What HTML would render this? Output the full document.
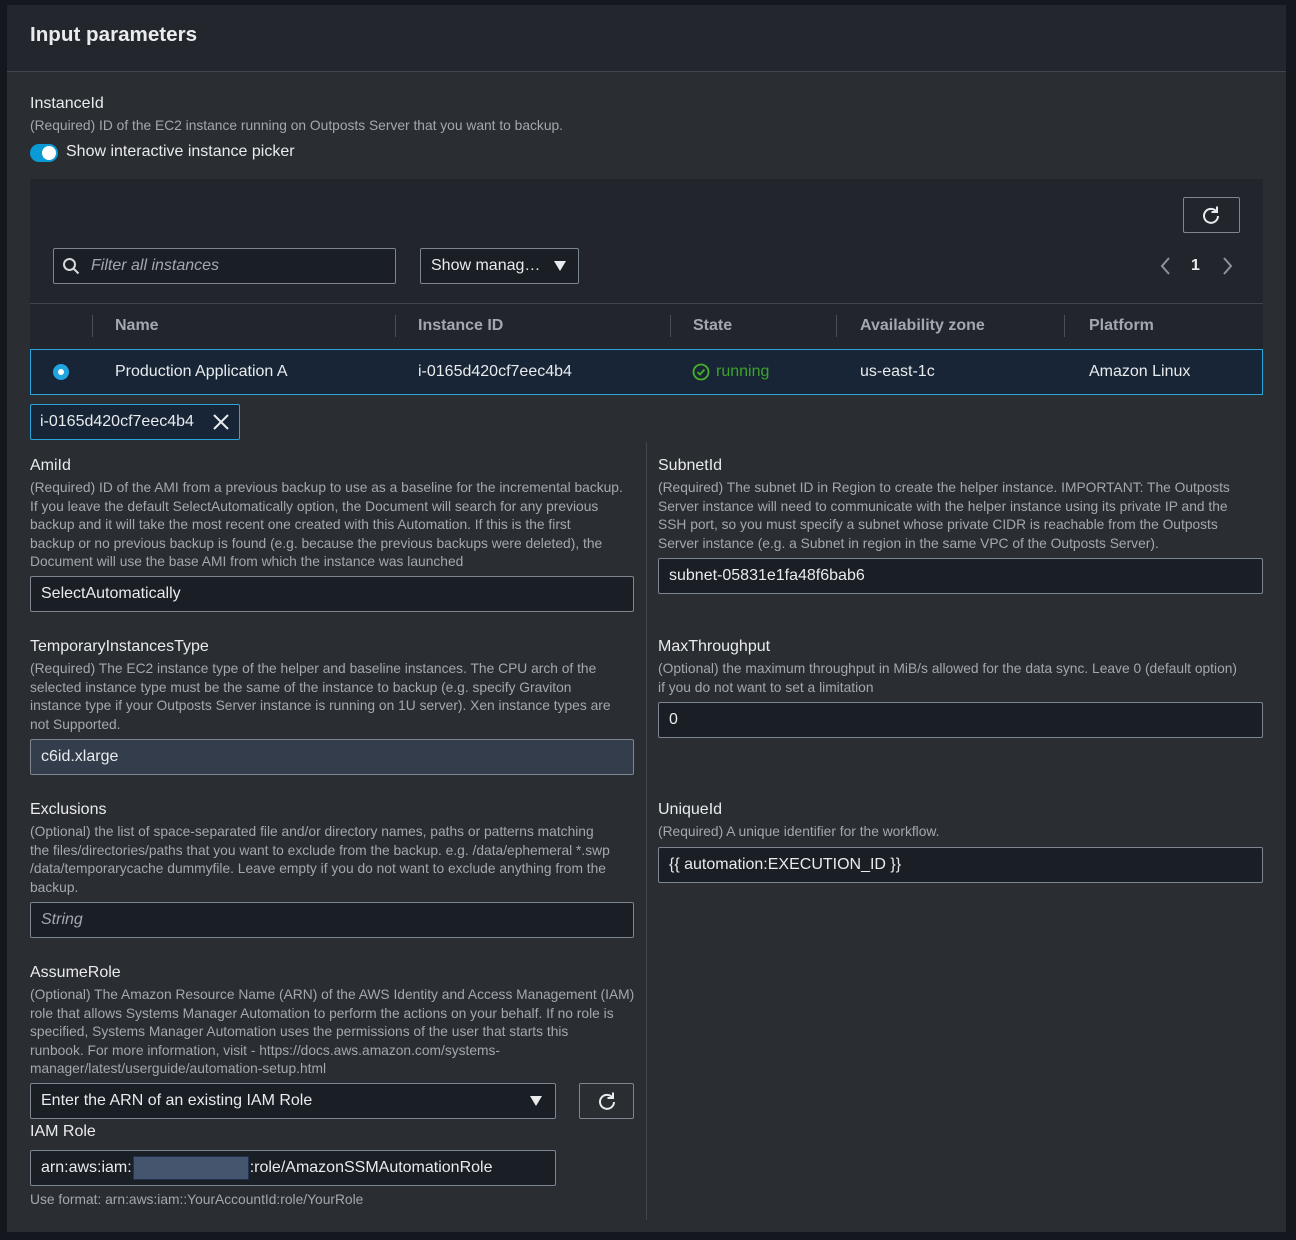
<!DOCTYPE html>
<html><head><meta charset="utf-8">
<style>
*{box-sizing:border-box;margin:0;padding:0}
body{width:1296px;height:1240px;background:#14171d;font-family:"Liberation Sans",sans-serif;position:relative;overflow:hidden;color:#e9ebed}
.a{position:absolute}
#panel{left:7px;top:5px;width:1279px;height:1227px;background:#2a2d32}
#head{left:7px;top:5px;width:1279px;height:67px;background:#23262c;border-bottom:1px solid #41454c}
.t{position:absolute;white-space:nowrap}
.lbl{font-size:16px;color:#e9ebed}
.d{font-size:13.8px;color:#a4a8ae;line-height:18.5px;white-space:nowrap}
.in{position:absolute;background:#1a1e25;border:1px solid #7d8590;border-radius:2px;font-size:16px;color:#e9ebed;padding-left:10px;display:flex;align-items:center;white-space:nowrap}
.th{font-size:16px;font-weight:bold;color:#a4a8ae;top:317px}
.cd{position:absolute;top:315px;width:1px;height:22px;background:#4a4f57}
.td{font-size:16px;color:#e9ebed;top:363px}
</style></head><body>
<div class="a" id="panel"></div>
<div class="a" id="head"></div>
<div class="t" style="left:30px;top:23px;font-size:20.6px;font-weight:bold;color:#e9ebed">Input parameters</div>

<div class="t lbl" style="left:30px;top:95px">InstanceId</div>
<div class="t d" style="left:30px;top:117px">(Required) ID of the EC2 instance running on Outposts Server that you want to backup.</div>
<div class="a" style="left:30px;top:144px;width:28px;height:18px;border-radius:9px;background:#0a9ad6"></div>
<div class="a" style="left:42px;top:146px;width:14px;height:14px;border-radius:7px;background:#fff"></div>
<div class="t" style="left:66px;top:143px;font-size:16px">Show interactive instance picker</div>

<div class="a" style="left:30px;top:179px;width:1233px;height:216px;background:#22252c"></div>
<div class="a" style="left:1183px;top:197px;width:57px;height:36px;border:1px solid #7d8590;border-radius:2px"></div>
<svg class="a" style="left:1201px;top:205px" width="20" height="20" viewBox="0 0 20 20"><path d="M15.5 6.5A7 7 0 1 0 17 11" fill="none" stroke="#e9ebed" stroke-width="2"/><path d="M16 1.5V7h-5.5" fill="none" stroke="#e9ebed" stroke-width="2"/></svg>
<div class="in" style="left:53px;top:248px;width:343px;height:36px;padding-left:37px;font-style:italic;color:#a4a8ae">Filter all instances</div>
<svg class="a" style="left:62px;top:257px" width="18" height="18" viewBox="0 0 18 18"><circle cx="7.5" cy="7.5" r="5.5" fill="none" stroke="#d5d8dc" stroke-width="2"/><path d="M11.5 11.5l5 5" stroke="#d5d8dc" stroke-width="2"/></svg>
<div class="in" style="left:420px;top:248px;width:159px;height:36px">Show manag…</div>
<div class="a" style="left:554px;top:261px;width:0;height:0;border-left:6px solid transparent;border-right:6px solid transparent;border-top:10px solid #e9ebed"></div>
<svg class="a" style="left:1157px;top:256px" width="80" height="20" viewBox="0 0 80 20"><path d="M12 2L5 10l7 8" fill="none" stroke="#8d9299" stroke-width="2"/><path d="M67 2l7 8-7 8" fill="none" stroke="#8d9299" stroke-width="2"/></svg>
<div class="t" style="left:1191px;top:257px;font-size:16px;font-weight:bold">1</div>
<div class="a" style="left:30px;top:303px;width:1233px;height:1px;background:#41454c"></div>
<div class="cd" style="left:92px"></div><div class="cd" style="left:395px"></div><div class="cd" style="left:670px"></div><div class="cd" style="left:836px"></div><div class="cd" style="left:1064px"></div>
<div class="t th" style="left:115px">Name</div>
<div class="t th" style="left:418px">Instance ID</div>
<div class="t th" style="left:693px">State</div>
<div class="t th" style="left:860px">Availability zone</div>
<div class="t th" style="left:1089px">Platform</div>
<div class="a" style="left:30px;top:349px;width:1233px;height:46px;background:#172536;border:1px solid #2aa5d9"></div>
<div class="a" style="left:53px;top:364px;width:16px;height:16px;border-radius:8px;background:#21a5e0"></div>
<div class="a" style="left:58px;top:369px;width:6px;height:6px;border-radius:3px;background:#fff"></div>
<div class="t td" style="left:115px">Production Application A</div>
<div class="t td" style="left:418px">i-0165d420cf7eec4b4</div>
<svg class="a" style="left:692px;top:363px" width="18" height="18" viewBox="0 0 18 18"><circle cx="9" cy="9" r="7.5" fill="none" stroke="#47b02a" stroke-width="1.8"/><path d="M5.5 9l2.5 2.5 4.5-5" fill="none" stroke="#47b02a" stroke-width="1.8"/></svg>
<div class="t td" style="left:716px;color:#3fa32a">running</div>
<div class="t td" style="left:860px">us-east-1c</div>
<div class="t td" style="left:1089px">Amazon Linux</div>

<div class="a" style="left:30px;top:404px;width:210px;height:36px;background:#172536;border:1px solid #2aa5d9;border-radius:2px"></div>
<div class="t" style="left:40px;top:413px;font-size:16px">i-0165d420cf7eec4b4</div>
<svg class="a" style="left:212px;top:413px" width="18" height="18" viewBox="0 0 18 18"><path d="M2 2l14 14M16 2L2 16" stroke="#e9ebed" stroke-width="2"/></svg>

<div class="a" style="left:646px;top:442px;width:1px;height:778px;background:#41454c"></div>

<div class="t lbl" style="left:30px;top:457px">AmiId</div>
<div class="t d" style="left:30px;top:479px">(Required) ID of the AMI from a previous backup to use as a baseline for the incremental backup.<br>If you leave the default SelectAutomatically option, the Document will search for any previous<br>backup and it will take the most recent one created with this Automation. If this is the first<br>backup or no previous backup is found (e.g. because the previous backups were deleted), the<br>Document will use the base AMI from which the instance was launched</div>
<div class="in" style="left:30px;top:576px;width:604px;height:36px">SelectAutomatically</div>

<div class="t lbl" style="left:30px;top:638px">TemporaryInstancesType</div>
<div class="t d" style="left:30px;top:660px">(Required) The EC2 instance type of the helper and baseline instances. The CPU arch of the<br>selected instance type must be the same of the instance to backup (e.g. specify Graviton<br>instance type if your Outposts Server instance is running on 1U server). Xen instance types are<br>not Supported.</div>
<div class="in" style="left:30px;top:739px;width:604px;height:36px;background:#343d4b">c6id.xlarge</div>

<div class="t lbl" style="left:30px;top:801px">Exclusions</div>
<div class="t d" style="left:30px;top:823px">(Optional) the list of space-separated file and/or directory names, paths or patterns matching<br>the files/directories/paths that you want to exclude from the backup. e.g. /data/ephemeral *.swp<br>/data/temporarycache dummyfile. Leave empty if you do not want to exclude anything from the<br>backup.</div>
<div class="in" style="left:30px;top:902px;width:604px;height:36px;font-style:italic;color:#a4a8ae">String</div>

<div class="t lbl" style="left:30px;top:964px">AssumeRole</div>
<div class="t d" style="left:30px;top:986px">(Optional) The Amazon Resource Name (ARN) of the AWS Identity and Access Management (IAM)<br>role that allows Systems Manager Automation to perform the actions on your behalf. If no role is<br>specified, Systems Manager Automation uses the permissions of the user that starts this<br>runbook. For more information, visit - https://docs.aws.amazon.com/systems-<br>manager/latest/userguide/automation-setup.html</div>
<div class="in" style="left:30px;top:1083px;width:526px;height:36px">Enter the ARN of an existing IAM Role</div>
<div class="a" style="left:530px;top:1096px;width:0;height:0;border-left:6px solid transparent;border-right:6px solid transparent;border-top:10px solid #e9ebed"></div>
<div class="a" style="left:579px;top:1083px;width:55px;height:36px;border:1px solid #7d8590;border-radius:2px"></div>
<svg class="a" style="left:597px;top:1091px" width="20" height="20" viewBox="0 0 20 20"><path d="M15.5 6.5A7 7 0 1 0 17 11" fill="none" stroke="#e9ebed" stroke-width="2"/><path d="M16 1.5V7h-5.5" fill="none" stroke="#e9ebed" stroke-width="2"/></svg>
<div class="t lbl" style="left:30px;top:1123px">IAM Role</div>
<div class="in" style="left:30px;top:1150px;width:526px;height:36px">arn:aws:iam:<span style="display:inline-block;width:116px;height:24px;background:#44556d;border:1px solid #1f3350;margin:0 1px"></span>:role/AmazonSSMAutomationRole</div>
<div class="t d" style="left:30px;top:1191px">Use format: arn:aws:iam::YourAccountId:role/YourRole</div>

<div class="t lbl" style="left:658px;top:457px">SubnetId</div>
<div class="t d" style="left:658px;top:479px">(Required) The subnet ID in Region to create the helper instance. IMPORTANT: The Outposts<br>Server instance will need to communicate with the helper instance using its private IP and the<br>SSH port, so you must specify a subnet whose private CIDR is reachable from the Outposts<br>Server instance (e.g. a Subnet in region in the same VPC of the Outposts Server).</div>
<div class="in" style="left:658px;top:558px;width:605px;height:36px">subnet-05831e1fa48f6bab6</div>

<div class="t lbl" style="left:658px;top:638px">MaxThroughput</div>
<div class="t d" style="left:658px;top:660px">(Optional) the maximum throughput in MiB/s allowed for the data sync. Leave 0 (default option)<br>if you do not want to set a limitation</div>
<div class="in" style="left:658px;top:702px;width:605px;height:36px">0</div>

<div class="t lbl" style="left:658px;top:801px">UniqueId</div>
<div class="t d" style="left:658px;top:823px">(Required) A unique identifier for the workflow.</div>
<div class="in" style="left:658px;top:847px;width:605px;height:36px">{{ automation:EXECUTION_ID }}</div>
</body></html>
